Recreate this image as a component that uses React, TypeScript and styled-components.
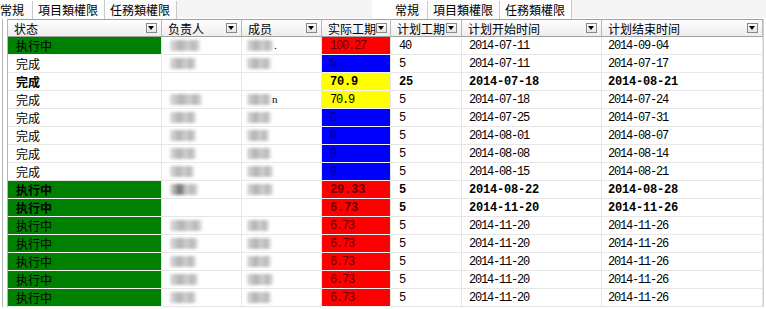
import { createGlobalStyle, styled } from 'styled-components';

type Tone = 'green' | 'red' | 'blue' | 'yellow' | 'none';

type Task = {
  status: string;
  bold?: boolean;
  owner?: number;
  member?: number;
  tail?: string;
  actual: string;
  tone: Tone;
  plan: string;
  start: string;
  end: string;
};

const tasks: Task[] = [
  { status: '执行中', owner: 30, member: 26, tail: '.', actual: '100.27', tone: 'red', plan: '40', start: '2014-07-11', end: '2014-09-04' },
  { status: '完成', owner: 26, member: 24, actual: '0', tone: 'blue', plan: '5', start: '2014-07-11', end: '2014-07-17' },
  { status: '完成', bold: true, actual: '70.9', tone: 'yellow', plan: '25', start: '2014-07-18', end: '2014-08-21' },
  { status: '完成', owner: 32, member: 24, tail: 'n', actual: '70.9', tone: 'yellow', plan: '5', start: '2014-07-18', end: '2014-07-24' },
  { status: '完成', owner: 26, member: 24, actual: '0', tone: 'blue', plan: '5', start: '2014-07-25', end: '2014-07-31' },
  { status: '完成', owner: 26, member: 22, actual: '0', tone: 'blue', plan: '5', start: '2014-08-01', end: '2014-08-07' },
  { status: '完成', owner: 26, member: 24, actual: '0', tone: 'blue', plan: '5', start: '2014-08-08', end: '2014-08-14' },
  { status: '完成', owner: 24, member: 26, actual: '0', tone: 'blue', plan: '5', start: '2014-08-15', end: '2014-08-21' },
  { status: '执行中', bold: true, owner: 28, member: 26, actual: '29.33', tone: 'red', plan: '5', start: '2014-08-22', end: '2014-08-28' },
  { status: '执行中', bold: true, actual: '6.73', tone: 'red', plan: '5', start: '2014-11-20', end: '2014-11-26' },
  { status: '执行中', owner: 32, member: 22, actual: '6.73', tone: 'red', plan: '5', start: '2014-11-20', end: '2014-11-26' },
  { status: '执行中', owner: 28, member: 24, actual: '6.73', tone: 'red', plan: '5', start: '2014-11-20', end: '2014-11-26' },
  { status: '执行中', owner: 26, member: 24, actual: '6.73', tone: 'red', plan: '5', start: '2014-11-20', end: '2014-11-26' },
  { status: '执行中', owner: 28, member: 26, actual: '6.73', tone: 'red', plan: '5', start: '2014-11-20', end: '2014-11-26' },
  { status: '执行中', owner: 26, member: 24, actual: '6.73', tone: 'red', plan: '5', start: '2014-11-20', end: '2014-11-26' },
];

const columns = ['状态', '负责人', '成员', '实际工期', '计划工期', '计划开始时间', '计划结束时间'];

const fills: Record<Tone, string> = {
  green: '#008000',
  red: '#ff0000',
  blue: '#0000ff',
  yellow: '#ffff00',
  none: 'transparent',
};

const inks: Record<Tone, string> = {
  green: '#000',
  red: '#6a0000',
  blue: '#000070',
  yellow: '#000',
  none: '#000',
};

function TabStrip({ active }: { active: number }) {
  const tabs = ['常規', '項目類權限', '任務類權限'];
  return (
    <S.TabGroup>
      {tabs.map((t, i) => (
        <S.Tab key={t} $active={i === active} $first={i === 0}>
          {t}
        </S.Tab>
      ))}
    </S.TabGroup>
  );
}

export default function App() {
  return (
    <>
      <GlobalStyle />
      <S.Window>
        <S.TabBar>
          <TabStrip active={1} />
          <S.TabFill $width={195} />
          <S.TabGap />
          <TabStrip active={2} />
          <S.TabFill />
        </S.TabBar>
        <S.Grid>
          <S.Corner />
          {columns.map((c) => (
            <S.HeadCell key={c}>
              <span>{c}</span>
              <S.DropButton />
            </S.HeadCell>
          ))}
          <S.Edge />
          {tasks.map((t, i) => (
            <S.Row key={i}>
              <S.Indicator />
              <S.Cell $tone={t.status === '执行中' ? 'green' : 'none'} $bold={t.bold} $pad={8}>
                {t.status}
              </S.Cell>
              <S.Cell $pad={8}>{t.owner && <S.Blur $width={t.owner} $dark={t.bold} />}</S.Cell>
              <S.Cell $pad={5}>
                {t.member && <S.Blur $width={t.member} />}
                {t.tail && <S.Tail>{t.tail}</S.Tail>}
              </S.Cell>
              <S.Cell $tone={t.tone} $bold={t.bold} $mono $pad={8}>
                {t.actual}
              </S.Cell>
              <S.Cell $bold={t.bold} $mono $pad={8}>
                {t.plan}
              </S.Cell>
              <S.Cell $bold={t.bold} $mono $pad={7}>
                {t.start}
              </S.Cell>
              <S.Cell $bold={t.bold} $mono $pad={6}>
                {t.end}
              </S.Cell>
              <S.Edge />
            </S.Row>
          ))}
        </S.Grid>
      </S.Window>
    </>
  );
}

const GlobalStyle = createGlobalStyle`
  html, body {
    margin: 0;
    padding: 0;
    background: #fff;
  }
  body {
    font-family: "Noto Sans CJK SC", "Liberation Sans", sans-serif;
    font-size: 12px;
    color: #000;
  }
`;

const S = {
  Window: styled.div`
    width: 766px;
    height: 309px;
    overflow: hidden;
    display: flex;
    flex-direction: column;
    background: #fff;
  `,
  TabBar: styled.div`
    height: 19px;
    display: flex;
    align-items: stretch;
    flex-shrink: 0;
  `,
  TabGroup: styled.div`
    display: flex;
    align-items: stretch;
    background: #fff;
  `,
  Tab: styled.div<{ $active?: boolean; $first?: boolean }>`
    display: flex;
    align-items: center;
    padding: ${(p) => (p.$first ? '0 8px 0 0' : '0 6px 0 5px')};
    margin-top: ${(p) => (p.$active ? '0' : '1px')};
    border-right: 1px solid #c9c9c9;
    background: ${(p) => (p.$active ? '#fff' : '#fbfbfb')};
    line-height: 1;
    white-space: nowrap;
  `,
  TabFill: styled.div<{ $width?: number }>`
    ${(p) => (p.$width ? `width: ${p.$width}px;` : 'flex: 1;')}
    background: #f4f4f4;
    border-bottom: 1px solid #fff;
  `,
  TabGap: styled.div`
    width: 23px;
    background: #fff;
  `,
  Grid: styled.div`
    display: grid;
    grid-template-columns: 8px 154px 80px 80px 69px 71px 140px 161px 3px;
    grid-auto-rows: 18px;
    grid-template-rows: 18px;
  `,
  Corner: styled.div`
    border-left: 1px solid #b4b4b4;
    border-right: 1px solid #b4b4b4;
    margin-left: 2px;
    background: #fff;
  `,
  Edge: styled.div`
    border-left: 1px solid #d0d0d0;
  `,
  HeadCell: styled.div`
    display: flex;
    align-items: center;
    justify-content: space-between;
    padding: 0 4px 0 6px;
    border-top: 1px solid #a0a0a0;
    border-bottom: 1px solid #a0a0a0;
    border-right: 1px solid #b8b8b8;
    background: linear-gradient(#fefefe, #ededed);
    white-space: nowrap;
    overflow: hidden;
    line-height: 1;
    span {
      padding-top: 1px;
    }
  `,
  DropButton: styled.div`
    position: relative;
    width: 11px;
    height: 10px;
    box-sizing: border-box;
    flex-shrink: 0;
    border: 1px solid #8a8a8a;
    background: linear-gradient(#ffffff, #e4e4e4);
    &::after {
      content: '';
      position: absolute;
      left: 1px;
      top: 2px;
      border-left: 3.5px solid transparent;
      border-right: 3.5px solid transparent;
      border-top: 4px solid #000;
    }
  `,
  Row: styled.div`
    display: contents;
  `,
  Indicator: styled.div`
    margin-left: 2px;
    border-left: 1px solid #b4b4b4;
    border-right: 1px solid #b4b4b4;
  `,
  Cell: styled.div<{ $tone?: Tone; $bold?: boolean; $mono?: boolean; $pad?: number }>`
    display: flex;
    align-items: center;
    padding-left: ${(p) => p.$pad ?? 6}px;
    border-bottom: 1px solid ${(p) => (p.$tone && p.$tone !== 'none' ? '#f4f4f4' : '#e6e6e6')};
    border-right: 1px solid #e6e6e6;
    background: ${(p) => fills[p.$tone ?? 'none']};
    color: ${(p) => inks[p.$tone ?? 'none']};
    font-weight: ${(p) => (p.$bold ? 700 : 400)};
    font-family: ${(p) =>
      p.$mono ? '"Liberation Mono", "DejaVu Sans Mono", monospace' : '"Noto Sans CJK SC", sans-serif'};
    font-size: 12px;
    letter-spacing: ${(p) => (p.$mono ? (p.$bold ? '-0.2px' : '-1.2px') : '0')};
    white-space: nowrap;
    overflow: hidden;
    line-height: 1;
  `,
  Blur: styled.span<{ $width: number; $dark?: boolean }>`
    display: inline-block;
    width: ${(p) => p.$width}px;
    height: 11px;
    background: linear-gradient(
      90deg,
      #dcdcdc,
      ${(p) => (p.$dark ? '#707070' : '#b2b2b2')} 35%,
      #cfcfcf 60%,
      #b6b6b6 80%,
      #e4e4e4
    );
    filter: blur(1.4px);
  `,
  Tail: styled.span`
    margin-left: 1px;
    font-family: "Liberation Serif", serif;
    font-size: 11px;
  `,
};
